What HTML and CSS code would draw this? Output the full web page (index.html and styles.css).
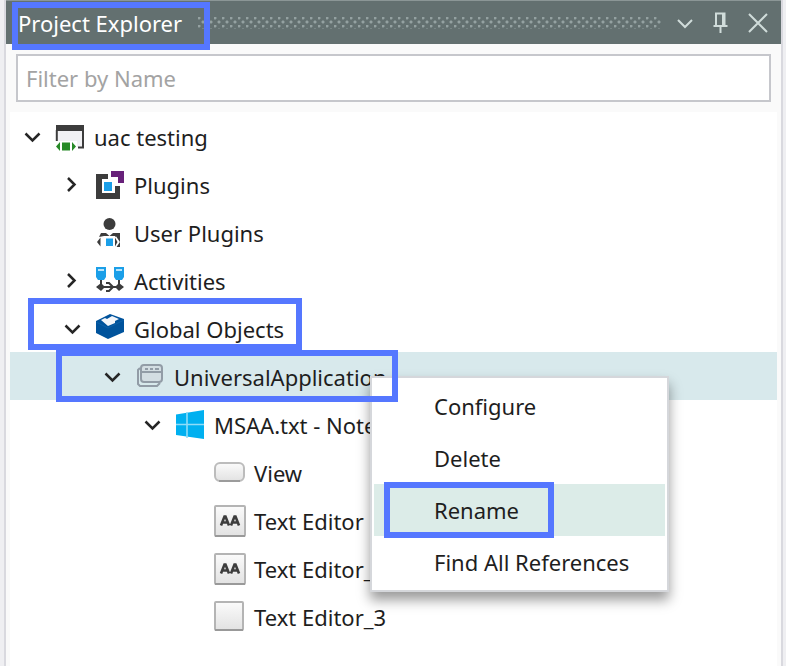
FILE: index.html
```html
<!DOCTYPE html>
<html lang="en">
<head>
  <meta charset="UTF-8" />
  <meta name="viewport" content="width=device-width, initial-scale=1" />
  <title>Project Explorer</title>
  <link rel="stylesheet" href="styles.css">
</head>
<body>

  <!-- shared chevrons -->
  <svg class="sprite" aria-hidden="true">
    <symbol id="down" viewBox="0 0 20 20"><path d="M3.500 6.500l7 7 7-7" /></symbol>
    <symbol id="right" viewBox="0 0 20 20"><path d="M6 3l6.500 6.500L6 16" /></symbol>
    <symbol id="textbox" viewBox="0 0 32 32">
      <rect x="1" y="1" width="30" height="30" rx="1" fill="url(#face)" stroke="#b4b4b4" stroke-width="2" />
      <path d="M1 31h30" stroke="#999" stroke-width="2" />
      <path d="M7 20.500l3.500-9h1l3.500 9M8.500 17.500h5M17 20.500l3.500-9h1l3.500 9M18.500 17.500h5" fill="none" stroke="#3d3d3d" stroke-width="2.600" />
    </symbol>
    <linearGradient id="face" x1="0" y1="0" x2="0" y2="1">
      <stop offset="0" stop-color="#fbfbfb" />
      <stop offset="1" stop-color="#e2e2e2" />
    </linearGradient>
  </svg>

  <main class="panel">
    <header class="titlebar">
      <h1>Project Explorer</h1>
      <div class="grip"></div>
      <button class="tool" aria-label="Window options">
        <svg width="20" height="20" viewBox="0 0 20 20"><path d="M3 7l7 7 7-7" /></svg>
      </button>
      <button class="tool" aria-label="Pin">
        <svg width="20" height="24" viewBox="0 0 20 24"><path d="M5 15V2.500h8.500V15M2.500 15h14M9.500 15v7" /><path d="M12 3v12" /></svg>
      </button>
      <button class="tool" aria-label="Close">
        <svg width="22" height="22" viewBox="0 0 22 22"><path d="M2 2l18 18M20 2L2 20" /></svg>
      </button>
    </header>

    <div class="filter">
      <input type="text" placeholder="Filter by Name" aria-label="Filter by Name">
    </div>

    <ul class="tree">
      <li class="row">
        <button class="twisty" aria-label="Collapse"><svg><use href="#down" /></svg></button>
        <svg class="icon" viewBox="0 0 32 32">
          <path d="M2 4h28v6H2z" fill="#3c3c3c" />
          <path d="M4 10h24v16H4z" fill="#f1f1f4" />
          <path d="M2.800 9v12M29 9v17.500h-5" fill="none" stroke="#3c3c3c" stroke-width="2" />
          <path d="M0 20h23v10H0z" fill="#fff" />
          <path d="M8 21.500h8v8H8zM6 21v9l-4-4.500zM18 21v9l4-4.500z" fill="#278a27" />
        </svg>
        <span>uac testing</span>
      </li>
      <li class="row level-1">
        <button class="twisty" aria-label="Expand"><svg><use href="#right" /></svg></button>
        <svg class="icon" viewBox="0 0 32 32">
          <path d="M2 5h12v5H8v14h13v-7h5v13H2z" fill="#3c3c3c" />
          <path d="M17 2h13v12h-6V8h-7z" fill="#68217a" />
          <path d="M10 13h8v9h-8z" fill="#1b9fe8" />
        </svg>
        <span>Plugins</span>
      </li>
      <li class="row level-1">
        <span class="twisty"></span>
        <svg class="icon" viewBox="0 0 32 32">
          <circle cx="15.500" cy="7" r="6" fill="#3c3c3c" />
          <path d="M7 16h5l3.500 3 3.500-3h7v14h-4l2-5-3-6H10l-5 1z" fill="#3c3c3c" />
          <path d="M11.500 21h8v8.500h-8z" fill="#1b9fe8" stroke="#fff" />
          <path d="M6.500 20.500l-3 4.500 3 4.500M20.500 20.500l3 4.500-3 4.500" fill="none" stroke="#fff" stroke-width="4" />
          <path d="M6.500 20.500v9L3 25zM21 20.500v9l2.500-4.500z" fill="#3c3c3c" />
        </svg>
        <span>User Plugins</span>
      </li>
      <li class="row level-1">
        <button class="twisty" aria-label="Expand"><svg><use href="#right" /></svg></button>
        <svg class="icon" viewBox="0 0 32 32">
          <path d="M2 2h10v10l-2 3H4l-2-3zM20 2h10v10l-2 3h-6l-2-3z" fill="#1b9fe8" />
          <path d="M4 5h6M22 5h6" stroke="#b8e4fb" stroke-width="2" />
          <path d="M7 15v6M25 15v6M3 22h26M12 18h3l4 4-4 4h-3" fill="none" stroke="#3c3c3c" stroke-width="2" />
          <path d="M7 18l4 4-4 4-5-4zM25 18l5 4-5 4-4-4z" fill="#3c3c3c" />
        </svg>
        <span>Activities</span>
      </li>
      <li class="row level-1">
        <button class="twisty" aria-label="Collapse"><svg><use href="#down" /></svg></button>
        <svg class="icon" viewBox="0 0 32 32">
          <path d="M16 1l14 5v13L14 26 2 20V8z" fill="#00539c" />
          <path d="M2 9l12 6 16-8" fill="none" stroke="#0c60a8" />
          <path d="M7 7l4-2 2 1 5-3 7 3-4 2v2l-7 3z" fill="#f2f5fa" />
        </svg>
        <span>Global Objects</span>
      </li>
      <li class="row level-2 selected">
        <button class="twisty" aria-label="Collapse"><svg><use href="#down" /></svg></button>
        <svg class="icon" viewBox="0 0 32 32">
          <g fill="none" stroke="#929ca6" stroke-width="2">
            <path d="M6 7l-2 2v14l2 2h17l3-3" />
            <rect x="7" y="4" width="21" height="17" rx="3" fill="#d3dde2" />
            <path d="M8 11h20" />
            <path d="M11 8h3M16 8h3M21 8h4" />
          </g>
        </svg>
        <span>UniversalApplication</span>
      </li>
      <li class="row level-3">
        <button class="twisty" aria-label="Collapse"><svg><use href="#down" /></svg></button>
        <svg class="icon" viewBox="0 0 32 32">
          <path d="M2 5.500L30 1v29L2 26z" fill="#00b0f0" />
          <path d="M13 3v26M2 15.500h28" stroke="#8fdcf8" stroke-width="1.600" />
        </svg>
        <span>MSAA.txt - Notepad</span>
      </li>
      <li class="row level-4">
        <span class="twisty"></span>
        <svg class="icon" viewBox="0 0 32 32">
          <rect x="1" y="6" width="29" height="18" rx="5" fill="url(#face)" stroke="#bcbcbc" stroke-width="2" />
          <path d="M5 24h21" stroke="#9c9c9c" stroke-width="2" />
        </svg>
        <span>View</span>
      </li>
      <li class="row level-4">
        <span class="twisty"></span>
        <svg class="icon"><use href="#textbox" /></svg>
        <span>Text Editor</span>
      </li>
      <li class="row level-4">
        <span class="twisty"></span>
        <svg class="icon"><use href="#textbox" /></svg>
        <span>Text Editor_2</span>
      </li>
      <li class="row level-4">
        <span class="twisty"></span>
        <svg class="icon" viewBox="0 0 32 32">
          <rect x="1" y="1" width="28" height="28" rx="1" fill="url(#face)" stroke="#b4b4b4" stroke-width="2" />
          <path d="M1 29h28" stroke="#999" stroke-width="2" />
        </svg>
        <span>Text Editor_3</span>
      </li>
    </ul>
  </main>

  <div class="menu">
    <button>Configure</button>
    <button>Delete</button>
    <button class="active">Rename</button>
    <button>Find All References</button>
  </div>

  <div class="mark mark-title"></div>
  <div class="mark mark-globals"></div>
  <div class="mark mark-application"></div>
  <div class="mark mark-rename"></div>

</body>
</html>
```
FILE: styles.css
```css
* {
  box-sizing: border-box;
}

body {
  margin: 0;
  padding: 0 3px 0 4px;
  height: 100vh;
  overflow: hidden;
  position: relative;
  background: #efeff2;
  color: #1e1e1e;
  font-family: "Noto Sans", "Open Sans", sans-serif;
  font-size: 22px;
}

button,
input {
  font: inherit;
  color: inherit;
}

button {
  border: 0;
  padding: 0;
  background: none;
}

.sprite {
  position: absolute;
  width: 0;
  height: 0;
}

.panel {
  min-height: 100vh;
  border: solid #d9d9df;
  border-width: 0 2px;
  background: #fafafa;
}

/* title bar */

.titlebar {
  display: flex;
  align-items: center;
  height: 44px;
  padding: 0 12px;
  border-top: 1px solid #8b9696;
  background: #637070;
  color: #fff;
}

.titlebar h1 {
  margin: 0 16px 0 0;
  font-size: 22px;
  font-weight: 400;
  white-space: nowrap;
}

.grip {
  flex: 1;
  height: 12px;
  margin-right: 14px;
  background-image:
    radial-gradient(circle at 1px 1px, #94a1a1 1px, transparent 2px),
    radial-gradient(circle at 5px 5px, #94a1a1 1px, transparent 2px);
  background-size: 8px 8px;
}

.tool {
  display: flex;
  margin-left: 16px;
}

.tool:first-of-type {
  margin-left: 0;
}

.tool svg {
  fill: none;
  stroke: #d0dcda;
  stroke-width: 2;
}

/* filter */

.filter {
  padding: 10px;
}

.filter input {
  display: block;
  width: 100%;
  height: 48px;
  padding: 0 8px;
  border: 2px solid #c6c7cc;
  background: #fff;
}

.filter input::placeholder {
  color: #a3a3a3;
}

/* tree */

.tree {
  margin: 0 4px;
  padding: 0;
  min-height: calc(100vh - 112px);
  list-style: none;
  background: #fff;
}

.row {
  display: flex;
  align-items: center;
  height: 48px;
  padding: 2px 0 0 12px;
  white-space: nowrap;
}

.level-1 { padding-left: 52px; }
.level-2 { padding-left: 92px; }
.level-3 { padding-left: 132px; }
.level-4 { padding-left: 172px; }

.selected {
  background: #d8e9ec;
}

.twisty {
  width: 20px;
  height: 20px;
  margin-right: 12px;
}

.twisty svg {
  display: block;
  width: 20px;
  height: 20px;
  fill: none;
  stroke: #262626;
  stroke-width: 2.5;
}

.icon {
  width: 32px;
  height: 32px;
  margin-right: 8px;
}

/* context menu */

.menu {
  position: absolute;
  top: 376px;
  left: 370px;
  width: 299px;
  padding: 2px;
  border: 2px solid #d5d7db;
  background: #fff;
  box-shadow: 0 8px 12px rgba(0, 0, 0, 0.4);
}

.menu button {
  display: block;
  width: 100%;
  height: 52px;
  padding-left: 60px;
  text-align: left;
  white-space: nowrap;
}

.menu .active {
  background: #dcece8;
}

/* callout frames */

.mark {
  position: absolute;
  border: 6px solid #5577ff;
  pointer-events: none;
}

.mark-title {
  top: 2px;
  left: 12px;
  width: 198px;
  height: 48px;
}

.mark-globals {
  top: 298px;
  left: 28px;
  width: 274px;
  height: 52px;
}

.mark-application {
  top: 350px;
  left: 56px;
  width: 342px;
  height: 52px;
}

.mark-rename {
  top: 482px;
  left: 384px;
  width: 170px;
  height: 56px;
}
```
